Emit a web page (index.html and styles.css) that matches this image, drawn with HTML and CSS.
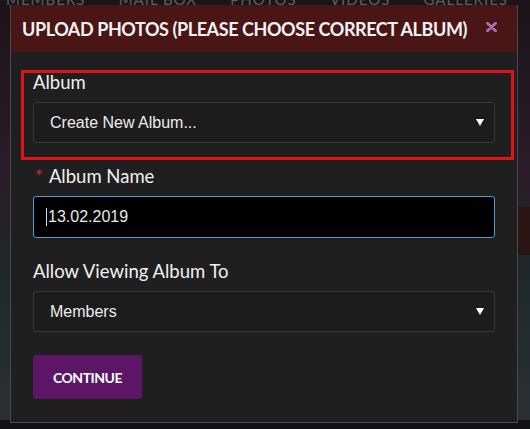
FILE: index.html
```html
<!DOCTYPE html>
<html>
<head>
<meta charset="utf-8">
<link rel="stylesheet" href="styles.css">
</head>
<body>
<div class="page">
  <nav class="nav">
    <span>MEMBERS</span><span>MAIL BOX</span><span>PHOTOS</span><span>VIDEOS</span><span>GALLERIES</span>
  </nav>
  <div class="side-band"></div>
</div>
<div class="modal">
  <div class="modal-header">
    <h1 class="modal-title">UPLOAD PHOTOS (PLEASE CHOOSE CORRECT ALBUM)</h1>
    <svg class="close" width="11" height="10" viewBox="0 0 11 10"><path d="M1.5 1.2 L9.5 8.8 M9.5 1.2 L1.5 8.8" stroke="#b46cb4" stroke-width="2.8" stroke-linecap="round"/></svg>
  </div>
  <div class="modal-body">
    <div class="field">
      <label class="label">Album</label>
      <div class="select"><span>Create New Album...</span><span class="arrow"></span></div>
    </div>
    <div class="field">
      <label class="label"><span class="req">*</span>Album Name</label>
      <div class="input"><span class="caret"></span>13.02.2019</div>
    </div>
    <div class="field">
      <label class="label">Allow Viewing Album To</label>
      <div class="select"><span>Members</span><span class="arrow"></span></div>
    </div>
    <button class="btn">CONTINUE</button>
    <div class="highlight"></div>
  </div>
</div>
</body>
</html>
```
FILE: styles.css
```css
html, body {
  margin: 0;
  padding: 0;
}
body {
  width: 530px;
  height: 429px;
  overflow: hidden;
  background: #121214;
  position: relative;
  font-family: Lato, "Open Sans", sans-serif;
}
.page {
  height: 429px;
  background: linear-gradient(180deg, #1a1418 0%, #2a1b28 40%, #1f2a2c 70%, #2b2f33 100%);
}
.nav {
  display: flex;
  justify-content: space-between;
  padding: 0 22px 0 6px;
  margin-top: -9px;
  color: #5e5e5e;
  font-size: 15px;
  letter-spacing: 1px;
  line-height: 16px;
  white-space: nowrap;
  height: 16px;
  overflow: hidden;
}
.side-band {
  margin-top: 200px;
  margin-left: 515px;
  height: 48px;
  background: #2a1414;
}
.modal {
  position: absolute;
  left: 10px;
  top: 5px;
  width: 506px;
  height: 417px;
  background: #1f1f1f;
  border: 1px solid #4a4a4a;
  border-top: none;
}
.modal-header {
  height: 47px;
  background: #4a1515;
  display: flex;
  align-items: center;
  padding: 0 12px 0 11px;
}
.modal-title {
  margin: 0;
  flex: 1;
  color: #f2f2f2;
  font-size: 18px;
  font-weight: 700;
  letter-spacing: -0.42px;
  white-space: nowrap;
  padding-top: 1px;
}
.close {
  display: block;
  margin-right: 8px;
  margin-top: -4px;
}
.modal-body {
  position: relative;
  padding: 20px 22px 0 22px;
}
.field {
  margin-bottom: 23px;
}
.label {
  display: block;
  color: #f0f0f0;
  font-size: 18.5px;
  line-height: 20px;
  margin-bottom: 10px;
}
.req {
  color: #c2322c;
  margin-left: 2px;
  margin-right: 6px;
}
.select {
  height: 39px;
  border: 1px solid #363636;
  border-radius: 3px;
  background: #1c1c1c;
  display: flex;
  align-items: center;
  justify-content: space-between;
  padding: 0 10px 0 16px;
  color: #ececec;
  font-family: "Liberation Sans", Arial, sans-serif;
  font-size: 16px;
}
.arrow {
  width: 0;
  height: 0;
  border-left: 4px solid transparent;
  border-right: 4px solid transparent;
  border-top: 7px solid #ffffff;
}
.input {
  height: 40px;
  border: 1px solid #4f9bd6;
  border-radius: 3px;
  background: #000;
  display: flex;
  align-items: center;
  padding: 0 12px;
  color: #e8e8e8;
  font-family: "Liberation Sans", Arial, sans-serif;
  font-size: 16px;
}
.caret {
  display: inline-block;
  width: 1px;
  height: 18px;
  background: #ddd;
  margin-right: 1px;
}
.btn {
  display: block;
  margin-top: 1px;
  height: 44px;
  padding: 0 20px;
  border: none;
  border-radius: 3px;
  background: #5d1566;
  color: #ffffff;
  font-family: Lato, sans-serif;
  font-weight: 700;
  font-size: 14px;
  letter-spacing: -0.5px;
}
.highlight {
  position: absolute;
  left: 10px;
  top: 18px;
  width: 487px;
  height: 84px;
  border: 3px solid #e0121a;
  pointer-events: none;
}
```
